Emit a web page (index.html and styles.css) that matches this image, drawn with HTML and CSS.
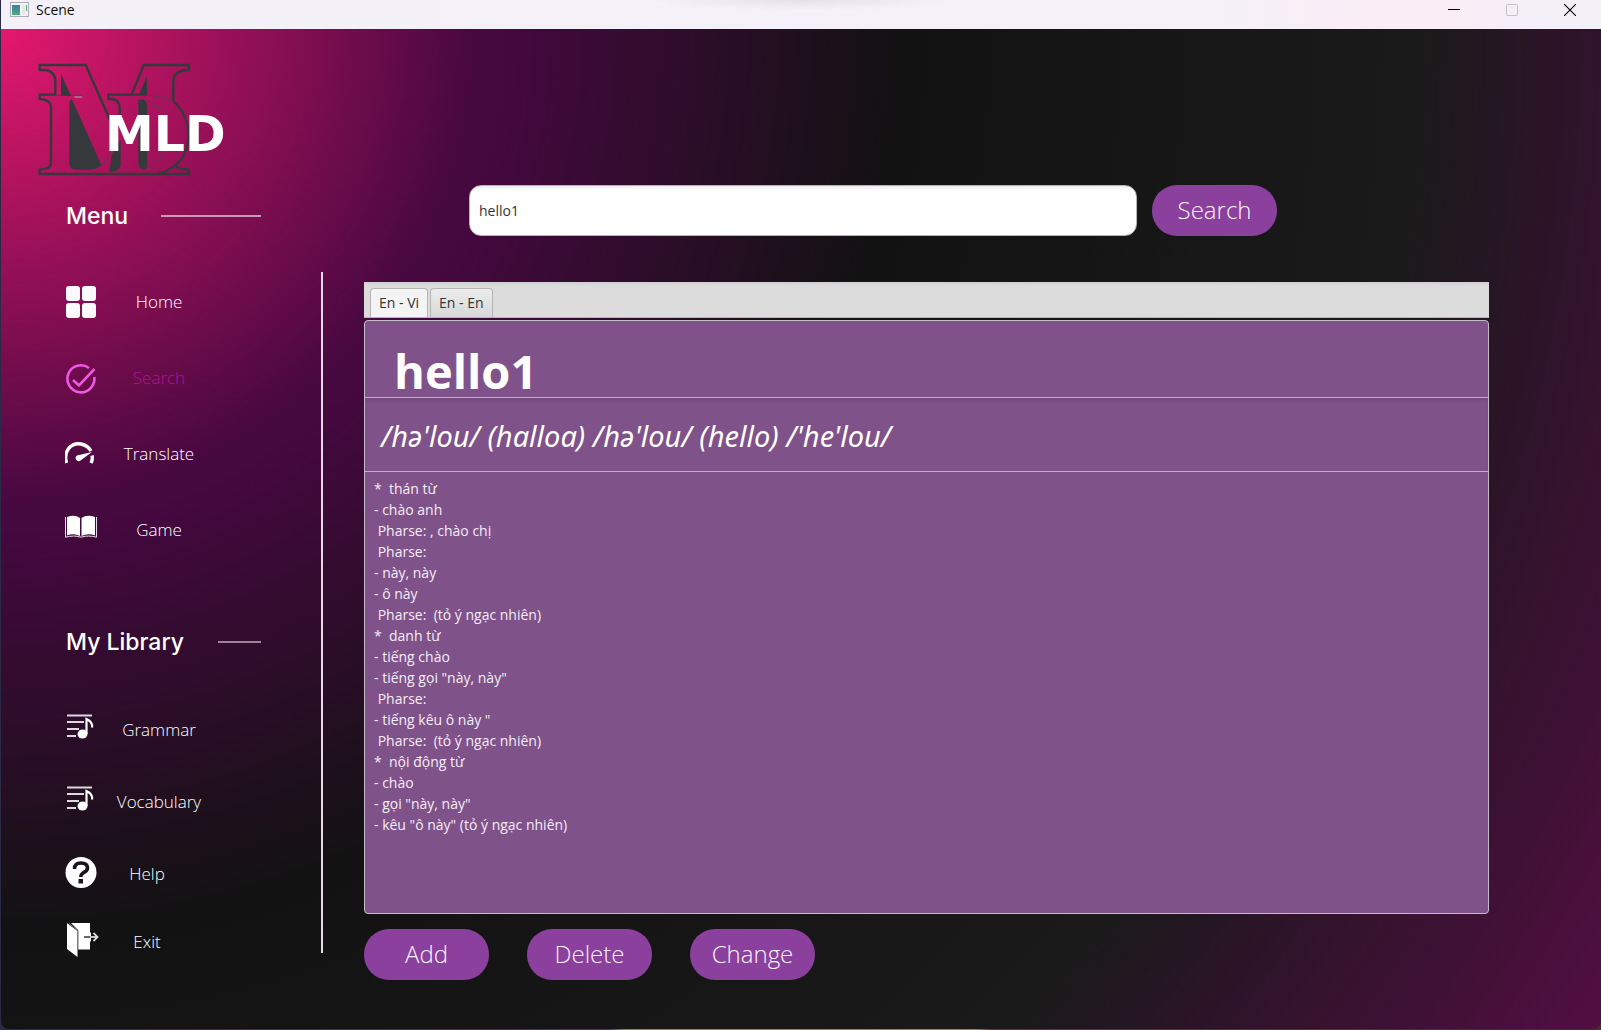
FILE: index.html
```html
<!DOCTYPE html>
<html lang="en">
<head>
<meta charset="utf-8">
<meta name="viewport" content="width=device-width, initial-scale=1">
<title>Scene</title>
<link rel="stylesheet" href="styles.css">
</head>
<body>
<div class="window">
  <header class="titlebar">
    <svg class="app-icon" width="19" height="16" viewBox="0 0 19 16" aria-hidden="true">
      <defs><linearGradient id="pic" x1="0" y1="0" x2="0" y2="1"><stop offset="0" stop-color="#3f7f9c"/><stop offset="1" stop-color="#4faa7c"/></linearGradient></defs>
      <rect x="0.5" y="0.5" width="18" height="14" fill="#f3f4f5" stroke="#a9adb8"/>
      <rect x="2" y="3" width="8" height="10" fill="url(#pic)"/>
      <rect x="12" y="3" width="3" height="10" fill="#e6e9e6"/>
      <rect x="16" y="3" width="1" height="6" fill="#5aa58d"/>
    </svg>
    <span class="title">Scene</span>
    <div class="window-controls">
      <button type="button" aria-label="Minimize"><svg width="12" height="12" viewBox="0 0 12 12"><path d="M0 5.5H12" stroke="#000"/></svg></button>
      <button type="button" aria-label="Maximize" disabled><svg width="12" height="12" viewBox="0 0 12 12"><rect x="0.5" y="0.5" width="11" height="11" rx="1" fill="none" stroke="#c4bfc6"/></svg></button>
      <button type="button" aria-label="Close"><svg width="12" height="12" viewBox="0 0 12 12"><path d="M0 0L12 12M12 0L0 12" stroke="#000" stroke-width="1.1"/></svg></button>
    </div>
  </header>

  <div class="scene">
    <aside class="sidebar">
      <div class="logo">
        <svg class="monogram" width="156" height="114" viewBox="110 186 468 342" aria-hidden="true">
          <g fill="none" stroke="#35393c" stroke-width="7">
            <path d="M330 362L256 195H118V210H135Q165 214 165 245V284H118V297Q152 300 152 322V490Q152 507 118 509V522H566V509Q535 508 522 497"/>
            <path d="M394 284L430 195H566V210Q519 210 519 245V303Q564 345 564 405Q564 468 522 497Q500 516 476 519"/>
            <path d="M440 284H324V297H335Q358 300 358 325V360"/>
          </g>
          <g fill="none" stroke="#5a3a55" stroke-width="3">
            <path d="M440 286Q490 288 522 306"/>
            <path d="M416 300H440Q496 320 497 400Q497 490 440 508"/>
            <path d="M165 286H245M184 228V286M330 462Q322 485 300 495"/>
          </g>
          <path d="M222 291H245" stroke="#a07a8c" stroke-width="5"/>
          <g fill="#35393c">
            <path d="M182 222L212 287H182Z"/>
            <path d="M214 296L303 495Q290 509 270 509H225Q207 509 207 490V305Z"/>
            <path d="M440 228L415 285H440Z"/>
            <path d="M414 299H430Q440 304 440 320V495Q438 509 428 509Q414 506 414 490Z"/>
            <path d="M334 464L361 420V495Q359 515 327 515Z"/>
          </g>
        </svg>
        <span class="wordmark">MLD</span>
      </div>

      <h2 class="section-title menu-title">Menu</h2>
      <nav class="nav menu-nav" aria-label="Menu">
        <a href="#home">
          <svg width="32" height="32" viewBox="0 0 32 32" fill="#fafafa"><rect x="1" width="14" height="15" rx="3"/><rect x="17" width="14" height="15" rx="3"/><rect x="1" y="17" width="14" height="15" rx="3"/><rect x="17" y="17" width="14" height="15" rx="3"/></svg>
          <span>Home</span>
        </a>
        <a href="#search" class="active" aria-current="page">
          <svg width="32" height="32" viewBox="0 0 32 32" fill="none" stroke="#ef57e4" stroke-width="2.6"><path d="M24 6A13.500 13.500 0 1 0 29.300 15"/><path d="M8 18L14 23.500L29.500 7"/></svg>
          <span>Search</span>
        </a>
        <a href="#translate">
          <svg width="32" height="32" viewBox="0 0 32 32"><path d="M1.500 25Q-1 16 4 10Q9 4.500 16 6Q23 7.500 26 13M27 17.500Q28 21 26 25" fill="none" stroke="#fff" stroke-width="3.400"/><path d="M12 17.500L27 14L15.500 22.500A2.800 2.800 0 0 1 12 17.500Z" fill="#fff"/></svg>
          <span>Translate</span>
        </a>
        <a href="#game">
          <svg width="32" height="32" viewBox="0 0 32 32" fill="#fff"><path d="M2 3Q10 0 15 4V22Q9 19 2 21.500Z"/><path d="M30 3Q22 0 16.500 4V22Q23 19 30 21.500Z"/><path d="M.500 3V23.200Q9 21 15 23H17Q23 21 31.500 23.200V3" fill="none" stroke="#e9dbe8"/></svg>
          <span>Game</span>
        </a>
      </nav>

      <h2 class="section-title library-title">My Library</h2>
      <nav class="nav library-nav" aria-label="My Library">
        <a href="#grammar">
          <svg width="32" height="32" viewBox="0 0 32 32"><path d="M2 1.500H27M2 8H19M2 15H14M2 22H11" fill="none" stroke="#ded8e0" stroke-width="2"/><ellipse cx="17.500" cy="20" rx="5" ry="4.500" fill="#fff"/><path d="M21.500 20V5Q28 8 27 13.500" fill="none" stroke="#fff" stroke-width="2.200"/></svg>
          <span>Grammar</span>
        </a>
        <a href="#vocabulary">
          <svg width="32" height="32" viewBox="0 0 32 32"><path d="M2 1.500H27M2 8H19M2 15H14M2 22H11" fill="none" stroke="#ded8e0" stroke-width="2"/><ellipse cx="17.500" cy="20" rx="5" ry="4.500" fill="#fff"/><path d="M21.500 20V5Q28 8 27 13.500" fill="none" stroke="#fff" stroke-width="2.200"/></svg>
          <span>Vocabulary</span>
        </a>
        <a href="#help" class="short">
          <svg width="32" height="34" viewBox="0 0 32 34"><circle cx="16" cy="15.500" r="15.500" fill="#fff"/><path d="M9.500 12Q9.500 6 15.800 6Q22.500 6 22.500 11Q22.500 14 18 16Q15.800 17.500 15.800 20" fill="none" stroke="#1c121c" stroke-width="3.600"/><rect x="13.500" y="22" width="4.500" height="4.500" fill="#1c121c"/></svg>
          <span>Help</span>
        </a>
        <a href="#exit" class="short">
          <svg width="32" height="38" viewBox="0 0 32 38" overflow="visible"><path d="M6 0H25V9.500H26V18.500H25V26.500H13V7Z" fill="#fff"/><path d="M2 0L12.500 8V34L2 26Z" fill="#fff"/><path d="M4 .500L13 7.500V27" fill="none" stroke="#77717a"/><path d="M19 14H31M28.500 10L32.500 14L28.500 18" fill="none" stroke="#6b646e" stroke-width="2"/><path d="M25 14H32M28.500 10L32.500 14L28.500 18" fill="none" stroke="#e8e4ea" stroke-width="1.500"/></svg>
          <span>Exit</span>
        </a>
      </nav>
    </aside>

    <div class="divider"></div>

    <main class="main">
      <form class="search" action="#search">
        <input type="text" value="hello1" aria-label="Word to look up">
        <button type="button" class="pill">Search</button>
      </form>

      <div class="tabs" role="tablist">
        <button type="button" role="tab" aria-selected="true" class="tab selected">En - Vi</button>
        <button type="button" role="tab" aria-selected="false" class="tab">En - En</button>
      </div>
      <section class="entry">
        <h1 class="word">hello1</h1>
        <p class="phonetic">/hə'lou/ (halloa) /hə'lou/ (hello) /'he'lou/</p>
        <textarea class="definition" readonly aria-label="Definition">*  thán từ
- chào anh
 Pharse: , chào chị
 Pharse:
- này, này
- ô này
 Pharse:  (tỏ ý ngạc nhiên)
*  danh từ
- tiếng chào
- tiếng gọi "này, này"
 Pharse:
- tiếng kêu ô này "
 Pharse:  (tỏ ý ngạc nhiên)
*  nội động từ
- chào
- gọi "này, này"
- kêu "ô này" (tỏ ý ngạc nhiên)</textarea>
      </section>

      <div class="actions">
        <button type="button" class="pill">Add</button>
        <button type="button" class="pill">Delete</button>
        <button type="button" class="pill">Change</button>
      </div>
    </main>
  </div>
</div>
</body>
</html>
```
FILE: styles.css
```css
* { box-sizing: border-box; }

body {
  margin: 0;
  font-family: "Open Sans", "Noto Sans", sans-serif;
  color: #fff;
}

button, input, textarea { font-family: inherit; }

.window {
  display: flex;
  flex-direction: column;
  min-height: 100vh;
  padding: 0 0 1px 1px;
  background: linear-gradient(90deg, #2b2a45 0%, #4a3550 38%, #8c8468 39%, #8c8468 61%, #5a3340 62%, #4a2a35 100%);
}

/* Title bar */
.titlebar {
  display: flex;
  align-items: center;
  height: 29px;
  padding: 0 15px 9px 9px;
  background:
    radial-gradient(150px 10px at 50% 0, #e4e1e8, #e4e1e800),
    linear-gradient(90deg, #f3f0f8 0%, #f4f1f8 75%, #faedf6 85%, #faedf6 91%, #f4f0f8 96%);
  color: #111;
}

.title {
  margin-left: 7px;
  font-size: 14px;
  line-height: 20px;
}

.window-controls {
  display: flex;
  gap: 26px;
  margin-left: auto;
}

.window-controls button {
  display: flex;
  justify-content: center;
  width: 32px;
  padding: 0;
  border: 0;
  background: none;
}

/* Scene */
.scene {
  display: flex;
  flex: 1;
  border-radius: 0 0 8px 8px;
  background: radial-gradient(circle at 0 0, #e4186e 0, #45083f 480px, #45083f 500px, #121212 900px, #1a1a1a 1420px, #2c1428 1560px, #520e42 1890px);
}

.sidebar {
  width: 320px;
  padding: 33px 0 0 36px;
}

.logo { position: relative; }

.monogram { display: block; }

.wordmark {
  position: absolute;
  left: 68px;
  top: 45px;
  font: bold 49px/56px "DejaVu Sans", sans-serif;
}

.section-title {
  display: flex;
  align-items: center;
  margin: 0 60px 0 29px;
  font: 500 23px/32px Inter, sans-serif;
}

.section-title::after {
  content: "";
  height: 2px;
  margin-left: auto;
  background: #c69abb;
}

.menu-title { margin-top: 24px; }
.menu-title::after { width: 100px; }
.library-title { margin-top: 58px; }
.library-title::after { width: 43px; background: #9c8399; }

.nav {
  display: grid;
  padding-left: 28px;
}

.menu-nav {
  grid-auto-rows: 76px;
  margin-top: 32px;
}

.library-nav {
  grid-template-rows: 72px 72px 72px 64px;
  margin-top: 36px;
}

.nav a {
  display: flex;
  align-items: center;
  color: #fff;
  font-size: 17px;
  font-weight: 350;
  line-height: 24px;
  text-decoration: none;
}

.nav span {
  width: 124px;
  text-align: center;
}

.nav .short span { width: 100px; }

.nav .active { color: #b0109c; }

.divider {
  width: 2px;
  margin: 243px 0 76px;
  background: #e6d8e4;
}

/* Main */
.main {
  display: flex;
  flex: 1;
  flex-direction: column;
  padding: 156px 112px 49px 41px;
}

.search {
  display: flex;
  gap: 15px;
  padding: 0 212px 0 105px;
}

.search input {
  flex: 1;
  min-width: 0;
  height: 51px;
  padding: 0 9px;
  border: 1px solid #b5b5b5;
  border-radius: 12px;
  background: linear-gradient(#ececec, #fff 4px);
  color: #333;
  font-size: 14px;
}

.pill {
  width: 125px;
  height: 51px;
  padding: 0 0 2px;
  border: 0;
  border-radius: 25px;
  background: #8b409d;
  color: #f9f4fa;
  font-size: 24px;
  font-weight: 350;
}

.tabs {
  display: flex;
  align-items: flex-end;
  gap: 2px;
  height: 36px;
  margin: 46px 0 2px;
  padding: 0 6px;
  border-bottom: 1px solid #b6b6b6;
  background: linear-gradient(#cfcfcf, #dcdcdc 4px);
}

.tab {
  height: 29px;
  padding: 0 8px 2px;
  border: 1px solid #b4b4b4;
  border-bottom: 0;
  border-radius: 4px 4px 0 0;
  background: linear-gradient(#ececec, #d8d8d8);
  color: #333;
  font-size: 14px;
}

.tab.selected { background: #f4f4f4; }

.entry {
  display: flex;
  flex: 1;
  flex-direction: column;
  border: 1px solid #c5bcc9;
  border-radius: 4px;
  background: #80528a;
}

.word, .phonetic {
  margin: 0;
  border-bottom: 1px solid #bdb0c2;
}

.word {
  padding: 24px 29px 0;
  font-size: 47px;
  line-height: 52px;
}

.phonetic {
  height: 74px;
  padding: 18px 16px;
  box-shadow: inset 0 4px 4px -2px #704879;
  font: italic 29px/40px "Noto Sans", sans-serif;
}

.definition {
  flex: 1;
  min-height: 380px;
  padding: 6px 9px;
  border: 0;
  outline: 0;
  background: none;
  color: #f4eef6;
  font-size: 14px;
  line-height: 21px;
  resize: none;
}

.actions {
  display: flex;
  gap: 38px;
  margin-top: 15px;
}
```
